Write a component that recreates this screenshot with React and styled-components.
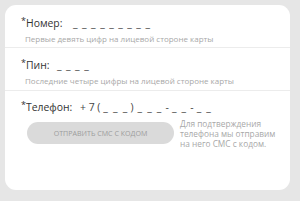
import React from "react";
import styled, { createGlobalStyle } from "styled-components";

const GlobalStyle = createGlobalStyle`
  html, body {
    margin: 0;
    padding: 0;
    background: #e6e6e6;
    font-family: "Open Sans", "Liberation Sans", sans-serif;
  }
`;

const Page = styled.div`
  width: 300px;
  height: 201px;
  padding: 5px 10px 11px 5px;
  box-sizing: border-box;
`;

const Card = styled.div`
  background: #fff;
  border-radius: 11px;
  height: 100%;
  display: flex;
  flex-direction: column;
`;

const Section = styled.div`
  padding: ${(p) => p.$pad || "9px 0 0 16px"};
  height: ${(p) => p.$h || "auto"};
  box-sizing: border-box;
  border-bottom: ${(p) => (p.$last ? "none" : "1px solid #ececec")};
`;

const Row = styled.div`
  display: flex;
  align-items: baseline;
  color: #333;
  font-size: 10.4px;
  line-height: 14px;
  white-space: pre;
`;

const Label = styled.span`
  width: ${(p) => p.$w}px;
  flex-shrink: 0;
  font-weight: 500;
  &::before {
    content: "*";
    font-size: 9px;
    font-weight: 400;
    vertical-align: 3px;
  }
`;

const Blank = styled.span`
  letter-spacing: ${(p) => p.$ls || "0.9px"};
  color: #444;
`;

const Sep = styled.span`
  color: #444;
  margin: 0 ${(p) => p.$mr || 2}px 0 ${(p) => p.$ml || 0}px;
`;

const Hint = styled.div`
  margin: 3px 0 0 4px;
  font-size: 8px;
  color: #a8a8a8;
`;

const SmsRow = styled.div`
  display: flex;
  align-items: flex-start;
  margin: 8px 0 0 6px;
  gap: 6px;
`;

const SmsButton = styled.button`
  width: 147px;
  height: 22px;
  border: none;
  border-radius: 11px;
  background: #dadada;
  color: #9c9c9c;
  font-family: "Open Sans", "Liberation Sans", sans-serif;
  font-size: 7.1px;
  text-transform: uppercase;
  padding: 0;
`;

const SideText = styled.div`
  font-size: 8.3px;
  line-height: 10px;
  color: #a8a8a8;
  margin-top: -3px;
`;

export default function App() {
  return (
    <>
      <GlobalStyle />
      <Page>
        <Card>
          <Section $h="43px">
            <Row>
              <Label $w={52}>Номер:</Label>
              <Blank>_ _ _ _ _ _ _ _ _</Blank>
            </Row>
            <Hint>Первые девять цифр на лицевой стороне карты</Hint>
          </Section>
          <Section $h="43px" $pad="8px 0 0 16px">
            <Row>
              <Label $w={36}>Пин:</Label>
              <Blank>_ _ _ _</Blank>
            </Row>
            <Hint>Последние четыре цифры на лицевой стороне карты</Hint>
          </Section>
          <Section $last $pad="7px 0 0 16px">
            <Row>
              <Label $w={59}>Телефон:</Label>
              <Sep $mr={3}>+ 7 (</Sep>
              <Blank $ls="1.2px">_ _ _</Blank>
              <Sep $ml={2} $mr={4}>)</Sep>
              <Blank $ls="1.2px">_ _ _</Blank>
              <Sep $ml={3} $mr={3}>-</Sep>
              <Blank $ls="1.2px">_ _</Blank>
              <Sep $ml={3} $mr={3}>-</Sep>
              <Blank $ls="1.2px">_ _</Blank>
            </Row>
            <SmsRow>
              <SmsButton>Отправить СМС с кодом</SmsButton>
              <SideText>
                Для подтверждения
                <br />
                телефона мы отправим
                <br />
                на него СМС с кодом.
              </SideText>
            </SmsRow>
          </Section>
        </Card>
      </Page>
    </>
  );
}
